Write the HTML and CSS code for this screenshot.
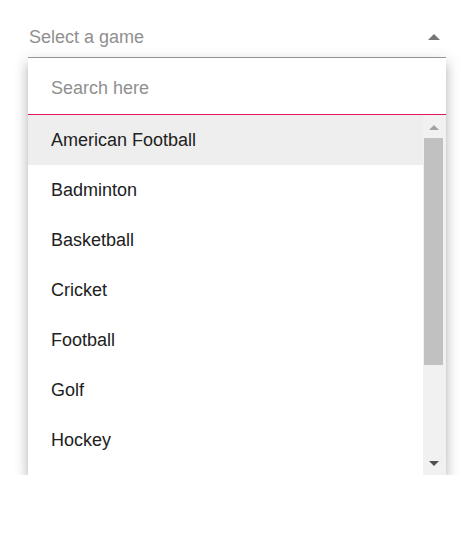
FILE: index.html
```html
<!DOCTYPE html>
<html>
<head>
  <title>Select a game</title>
  <meta name="viewport" content="width=device-width, initial-scale=1.0">
  <link rel="stylesheet" href="styles.css">
</head>
<body>
  <div class="container">
    <div class="select">
      <span class="placeholder">Select a game</span>
      <svg class="caret" width="14" height="8" viewBox="0 0 14 8"><path d="M1 7 L7 1 L13 7 Z" fill="#757575"/></svg>
    </div>

    <!-- popup with filter box and the list -->
    <div class="popup">
      <div class="search">
        <input type="text" class="search-input" placeholder="Search here">
      </div>
      <div class="list-wrap">
        <ul class="list">
          <li class="item active">American Football</li>
          <li class="item">Badminton</li>
          <li class="item">Basketball</li>
          <li class="item">Cricket</li>
          <li class="item">Football</li>
          <li class="item">Golf</li>
          <li class="item">Hockey</li>
          <li class="item">Rugby</li>
          <li class="item">Snooker</li>
          <li class="item">Tennis</li>
        </ul>
        <div class="scrollbar">
          <div class="scroll-btn">
            <svg width="10" height="6" viewBox="0 0 10 6"><path d="M0 6 L5 1 L10 6 Z" fill="#a3a3a3"/></svg>
          </div>
          <div class="track">
            <div class="thumb"></div>
          </div>
          <div class="scroll-btn">
            <svg width="10" height="6" viewBox="0 0 10 6"><path d="M0 0 L10 0 L5 5 Z" fill="#505050"/></svg>
          </div>
        </div>
      </div>
    </div>
  </div>
</body>
</html>
```

FILE: styles.css
```css
body {
  margin: 0;
  padding: 0;
  background: #fff;
  font-family: "Comic Sans MS", "Liberation Sans", sans-serif;
  font-size: 18px;
}

.container {
  width: 418px;
  margin-left: 28px;
}

.select {
  display: flex;
  justify-content: space-between;
  align-items: center;
  height: 26px;
  padding: 24px 5px 7px 1px;
  border-bottom: 1px solid #9e9e9e;
}
.placeholder {
  color: #8f8f8f;
  line-height: 26px;
}
.caret {
  display: block;
}

.popup {
  background: #fff;
  box-shadow: 0 5px 5px -3px rgba(0, 0, 0, 0.2), 0 8px 10px 1px rgba(0, 0, 0, 0.14), 0 3px 14px 2px rgba(0, 0, 0, 0.12);
}

.search {
  height: 26px;
  padding: 17px 23px 13px 23px;
  border-bottom: 1px solid #e3165b;
}
.search-input {
  display: block;
  width: 100%;
  height: 26px;
  padding: 0;
  border: none;
  outline: none;
  background: transparent;
  font-family: inherit;
  font-size: 18px;
  color: #212121;
}
.search-input::placeholder {
  color: #8f8f8f;
}

.list-wrap {
  display: flex;
  height: 360px;
}
.list {
  flex: 1;
  list-style: none;
  margin: 0;
  padding: 0;
  overflow: hidden;
}
.item {
  height: 50px;
  line-height: 50px;
  padding-left: 23px;
  color: #212121;
}
.item.active {
  background: #eeeeee;
}

/* fake scrollbar, the browser hides the real one */
.scrollbar {
  width: 23px;
  display: flex;
  flex-direction: column;
  background: #f1f1f1;
}
.scroll-btn {
  height: 23px;
  display: flex;
  align-items: center;
  justify-content: center;
}
.scroll-btn svg {
  display: block;
  margin-left: -2px;
}
.track {
  flex: 1;
  padding: 0 3px 0 1px;
}
.thumb {
  height: 227px;
  background: #c1c1c1;
}
```
